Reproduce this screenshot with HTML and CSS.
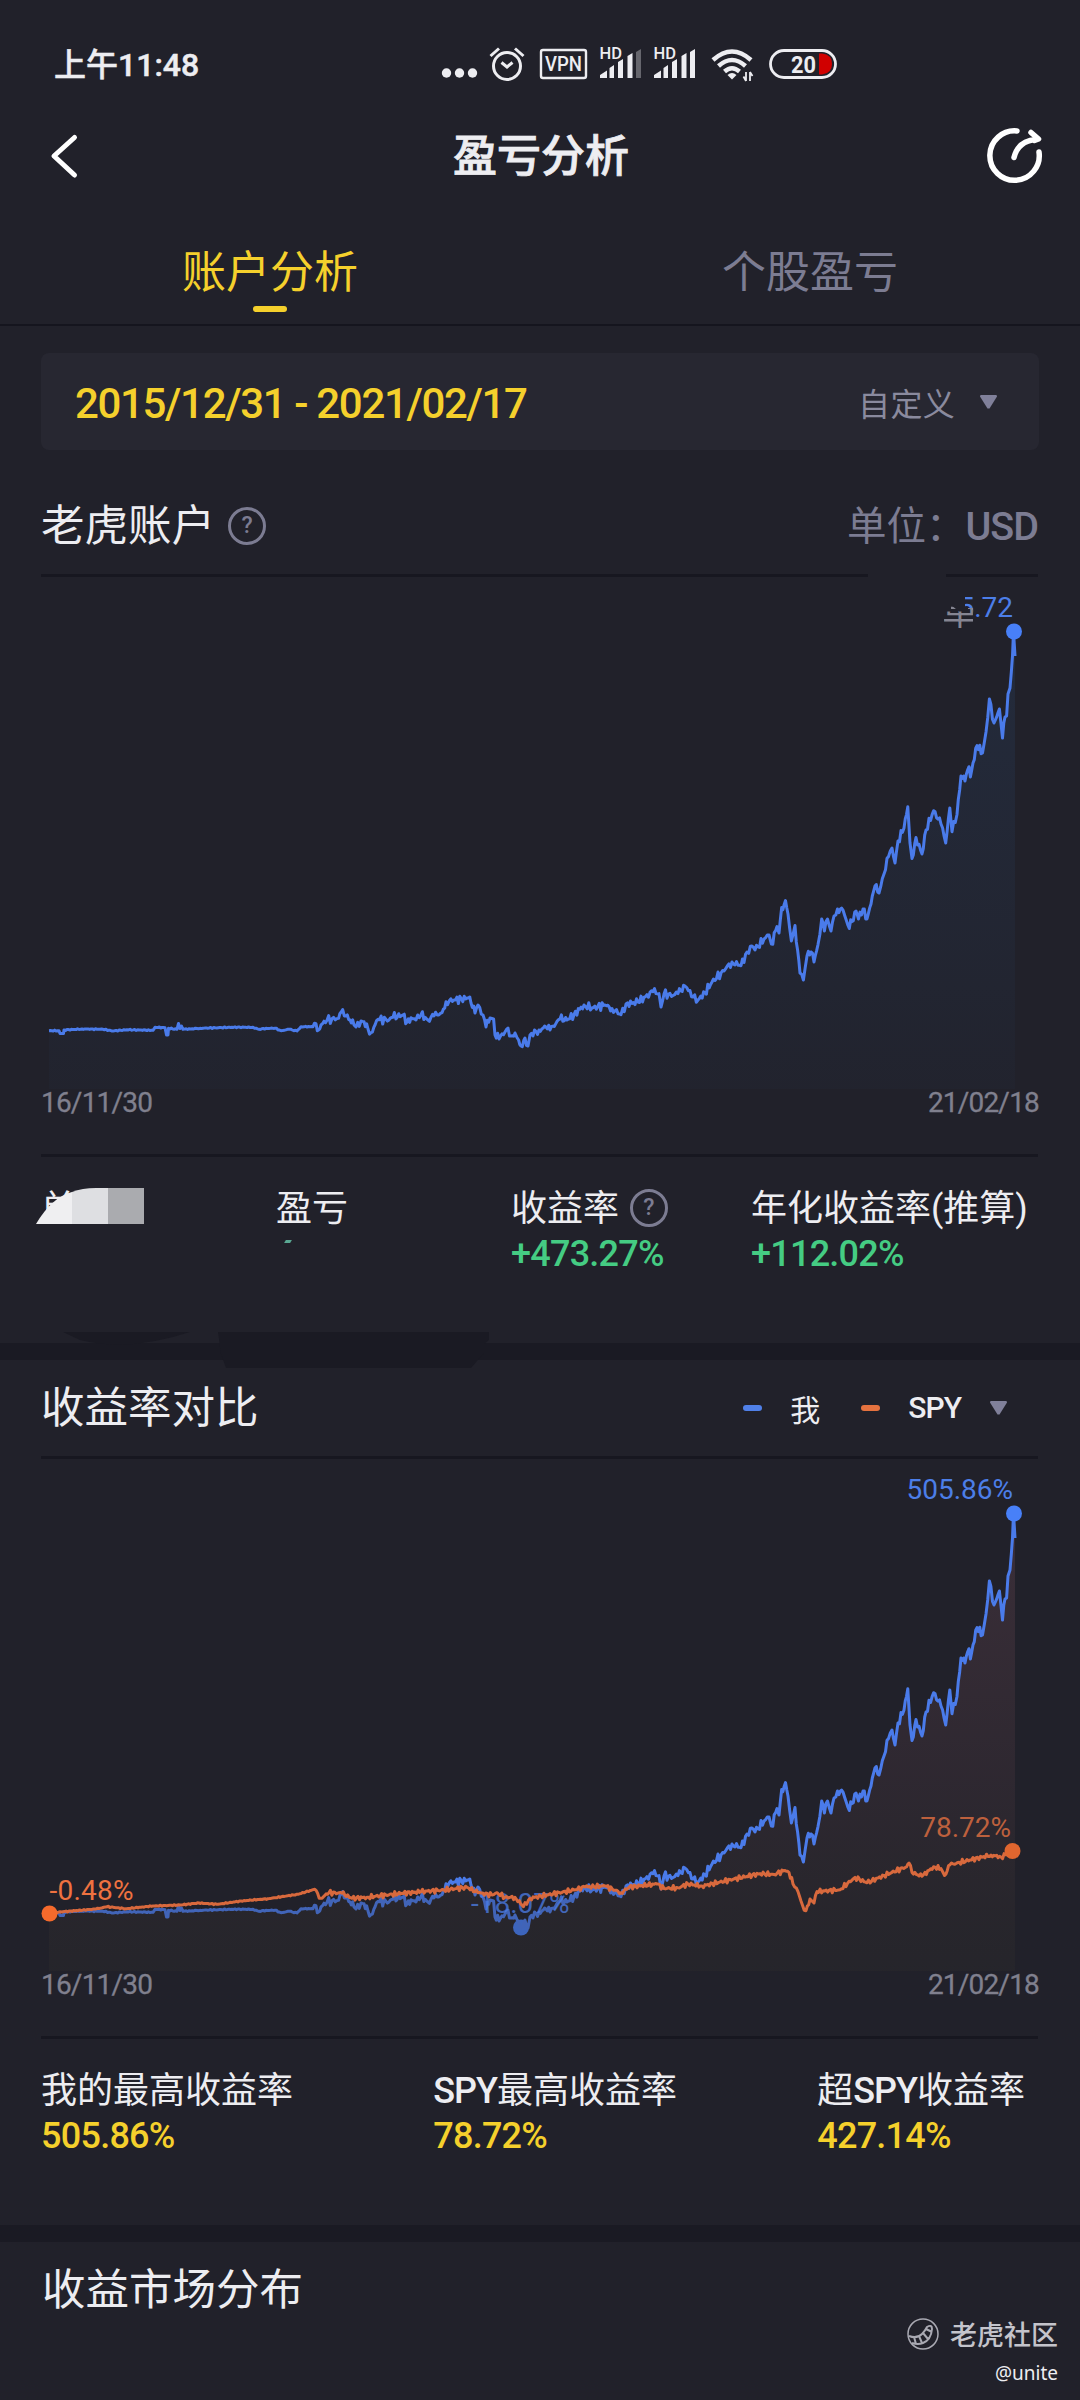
FILE: index.html
```
<!DOCTYPE html>
<html lang="zh-CN">
  <head>
    <meta charset="UTF-8" />
    <meta name="viewport" content="width=device-width, initial-scale=1.0" />
    <title>盈亏分析</title>
    <link rel="stylesheet" href="styles.css">
  </head>
  <body>
    <div class="status">
      <span class="time">上午11:48</span>
      <svg class="status-icons" width="410" height="50" viewBox="440 40 410 50" fill="#ededf1">
        <circle cx="446.5" cy="73" r="4.7" />
        <circle cx="459.5" cy="73" r="4.7" />
        <circle cx="472.5" cy="73" r="4.7" />
        <!-- alarm -->
        <g fill="none" stroke="#ededf1" stroke-width="3">
          <circle cx="507" cy="66" r="13.5" />
          <path d="M501.5 62.5l5.5 4.5 5.5-4.5M490.5 56l8.5-7.5M523.5 56l-8.500-7.500" />
        </g>
        <rect x="541" y="50" width="45" height="28" rx="2" fill="none" stroke="#ededf1" stroke-width="2.4" />
        <text x="563.5" y="71" font-size="20" font-weight="500" text-anchor="middle" textLength="37" lengthAdjust="spacingAndGlyphs">VPN</text>
        <!-- signal -->
        <text x="599.5" y="59" font-size="16.5" font-weight="500" textLength="22.5" lengthAdjust="spacingAndGlyphs">HD</text>
        <path d="M600 78v-3l7-4.500v7.500zM609.500 78v-10l4.500-3v13zM618 78v-16l5-3v19zM627.500 78v-22l5-3v25z" />
        <path d="M636 78v-26l5-3v29z" fill="#66666d" />
        <text x="653.5" y="59" font-size="16.5" font-weight="500" textLength="22.5" lengthAdjust="spacingAndGlyphs">HD</text>
        <path d="M654 78v-3l7-4.500v7.500zM663.500 78v-10l4.500-3v13zM672 78v-16l5-3v19zM681.500 78v-22l5-3v25zM690 78v-26l5-3v29z" />
        <!-- wifi -->
        <g fill="none" stroke="#ededf1" stroke-width="4.5">
          <path d="M713 60q19-17 38 0M718.5 66q13.5-12 27 0M724.5 71.5q7.5-6.5 15 0" />
        </g>
        <path d="M727.5 75q4.5-4 9 0l-4.5 4.5z" />
        <path d="M746 72v9M750 81v-9M743.5 76.5l2.5 4.5M752.5 76l-2.5-4" fill="none" stroke="#ededf1" stroke-width="1.8" />
        <!-- battery -->
        <path d="M819 53.500h3q10 1 10 10.500t-10 10.500h-3z" fill="#d00000" />
        <rect x="770.5" y="50.500" width="65" height="27" rx="13.5" fill="none" stroke="#ededf1" stroke-width="2.8" />
        <text x="791" y="72.500" font-size="24" font-weight="700" textLength="25" lengthAdjust="spacingAndGlyphs">20</text>
      </svg>
    </div>

    <header class="navbar">
      <svg width="60" height="60" viewBox="0 0 60 60" fill="none" stroke="#fff" stroke-width="5" stroke-linecap="round" stroke-linejoin="round">
        <path d="M36.500 12.500L16 31 36.500 50" />
      </svg>
      <h1>盈亏分析</h1>
      <svg width="60" height="60" viewBox="984 125 60 60" fill="none" stroke="#fff" stroke-width="5.5" stroke-linecap="round" stroke-linejoin="round">
        <path d="M1017 131A24.700 24.700 0 1 0 1039 152M1014 157.500Q1018 141 1036 139.500M1031 132.500l7.500 6.500-4 1.500" />
      </svg>
    </header>

    <nav class="tabs">
      <div class="tab active">账户分析</div>
      <div class="tab">个股盈亏</div>
    </nav>

    <div class="range">
      <span class="dates">2015/12/31 - 2021/02/17</span>
      <span class="custom">自定义 <i class="caret"></i></span>
    </div>

    <section class="account">
      <div class="head">
        <h2>老虎账户</h2>
        <span class="help">?</span>
        <span class="unit">单位：<b>USD</b></span>
      </div>
      <div class="line split"><i></i></div>
      <svg class="chart" id="assetChart" width="997" height="512" viewBox="41 577 997 512">
        <defs>
          <linearGradient id="blueFill" x1="0" y1="631" x2="0" y2="1089" gradientUnits="userSpaceOnUse">
            <stop offset="0" stop-color="#3c90f0" stop-opacity=".09" />
            <stop offset="1" stop-color="#3c90f0" stop-opacity=".02" />
          </linearGradient>
          <clipPath id="unitClip"><path d="M944 611.500h29v20h-29zM951 605l8 6.500h-8zM968 608h5v4h-5z" /></clipPath>
          <clipPath id="valueClip"><path d="M965 590h60v32h-52v-12h-8z" /></clipPath>
        </defs>
        <text class="mark blue" x="1013" y="617" text-anchor="end" clip-path="url(#valueClip)">5.72</text>
        <text class="ghost" x="942" y="625" clip-path="url(#unitClip)">单</text>
        <path class="area" fill="url(#blueFill)" />
        <path class="curve blue-line" />
        <circle cx="1014" cy="631.5" r="8" fill="#4880f8" />
      </svg>
      <div class="axis"><span>16/11/30</span><span>21/02/18</span></div>
      <div class="line"></div>
      <div class="stats">
        <div class="stat masked">
          <span class="name">单</span>
          <svg class="mosaic" width="108" height="36" viewBox="0 0 108 36">
            <path d="M0 36Q16 9 36 4v32z" fill="#efeff1" />
            <path d="M36 4Q46 0 60 0h12v36H36z" fill="#dedfe2" />
            <path d="M72 0h36v36H72z" fill="#aaabaf" />
          </svg>
        </div>
        <div class="stat profit">
          <span class="name">盈亏</span>
          <i class="tick"></i>
        </div>
        <div class="stat rate">
          <span class="name">收益率 <span class="help">?</span></span>
          <span class="value green">+473.27%</span>
        </div>
        <div class="stat">
          <span class="name">年化收益率(推算)</span>
          <span class="value green">+112.02%</span>
        </div>
      </div>
    </section>

    <div class="gap">
      <svg class="smudge" width="440" height="38" viewBox="60 1331 440 38" fill="#1a1a23">
        <path d="M63 1332h127q-60 20-110 8zM218 1332h271v8l-5 4v9l-13 15H226l-5-14z" />
      </svg>
    </div>

    <section class="compare">
      <div class="head">
        <h2>收益率对比</h2>
        <div class="legend">
          <i class="dash"></i><span class="me">我</span>
          <i class="dash orange"></i><b>SPY</b>
          <i class="caret"></i>
        </div>
      </div>
      <div class="line"></div>
      <svg class="chart" id="rateChart" width="997" height="512" viewBox="41 1459 997 512">
        <defs>
          <linearGradient id="warmFill" x1="0" y1="1513" x2="0" y2="1971" gradientUnits="userSpaceOnUse">
            <stop offset="0" stop-color="#f490a5" stop-opacity=".12" />
            <stop offset=".6" stop-color="#f49095" stop-opacity=".06" />
            <stop offset="1" stop-color="#a09040" stop-opacity=".035" />
          </linearGradient>
          <linearGradient id="blueStroke" x1="0" y1="1882" x2="0" y2="1900" gradientUnits="userSpaceOnUse">
            <stop offset="0" stop-color="#4a7bea" />
            <stop offset="1" stop-color="#4164b8" />
          </linearGradient>
        </defs>
        <text class="mark blue" x="1013" y="1499" text-anchor="end">505.86%</text>
        <path class="area" fill="url(#warmFill)" />
        <circle cx="521" cy="1927.5" r="8" fill="#3d65bd" />
        <path class="curve blue-line" stroke="url(#blueStroke)" />
        <text class="mark blue dim" x="471" y="1913">-18.07%</text>
        <path class="curve orange-line" />
        <circle cx="1014" cy="1513.5" r="8" fill="#4880f8" />
        <text class="mark orange dark" x="1011" y="1837" text-anchor="end">78.72%</text>
        <circle cx="1012.5" cy="1851" r="8" fill="#e0662f" />
        <text class="mark orange" x="49.5" y="1900" textLength="84">-0.48%</text>
        <circle cx="49.5" cy="1913.5" r="8" fill="#f56a2c" />
      </svg>
      <div class="axis"><span>16/11/30</span><span>21/02/18</span></div>
      <div class="line"></div>
      <div class="stats tops">
        <div class="stat">
          <span class="name">我的最高收益率</span>
          <span class="value yellow">505.86%</span>
        </div>
        <div class="stat">
          <span class="name"><b>SPY</b>最高收益率</span>
          <span class="value yellow">78.72%</span>
        </div>
        <div class="stat">
          <span class="name">超<b>SPY</b>收益率</span>
          <span class="value yellow">427.14%</span>
        </div>
      </div>
    </section>

    <div class="gap"></div>

    <section class="market">
      <h2>收益市场分布</h2>
    </section>

    <footer class="watermark">
      <div class="brand">
        <svg width="32" height="32" viewBox="0 0 32 32" fill="none" stroke="#a9a9b2" stroke-width="1.5">
          <circle cx="16" cy="16" r="15" />
          <path d="M2 18q8 3 13-2 3-3 5-7 5-3 5 2-1 11-9 14-5 2-11 0M7 19l2 7M12 18l3 7M16 15l5 6M19 11l6 3" stroke-width="2" />
        </svg>
        <span>老虎社区</span>
      </div>
      <div class="user">@unite</div>
    </footer>

    <script src="script.js"></script>
  </body>
</html>
```
FILE: styles.css
```
body {
  margin: 0;
  width: 1080px;
  height: 2400px;
  overflow: hidden;
  display: flex;
  flex-direction: column;
  background-color: #21212a;
  color: #ededf1;
  font-family: Roboto, "Noto Sans CJK SC", sans-serif;
}

body > * {
  flex-shrink: 0;
  box-sizing: border-box;
}

svg {
  display: block;
}

i {
  font-style: normal;
}

h1,
h2 {
  margin: 0;
  font-size: 44px;
  line-height: 60px;
  font-weight: 400;
}

h2 {
  font-size: 43.5px;
}

b {
  font-weight: 500;
  letter-spacing: -1px;
}

.status {
  display: flex;
  height: 110px;
  padding: 40px 0 0 54px;
}

.time {
  width: 386px;
  font-size: 32px;
  font-weight: 500;
  line-height: 51px;
  -webkit-text-stroke: 0.5px #ededf1;
}

.navbar {
  display: flex;
  justify-content: space-between;
  align-items: center;
  height: 90px;
  padding: 0 36px 0 38px;
}

.navbar h1 {
  padding-top: 3px;
  font-weight: 500;
  -webkit-text-stroke: 0.8px #ededf1;
}

.tabs {
  display: flex;
  height: 126px;
  border-bottom: 2px solid #15151e;
}

.tab {
  flex: 1;
  display: flex;
  flex-direction: column;
  align-items: center;
  padding-top: 43px;
  font-size: 44px;
  line-height: 60px;
  color: #7c7c92;
}

.active {
  color: #f5d02c;
}

.active::after {
  content: "";
  width: 34px;
  height: 6px;
  margin-top: 3px;
  border-radius: 3px;
  background-color: #f5d02c;
}

.range {
  display: flex;
  justify-content: space-between;
  align-items: center;
  height: 97px;
  margin: 27px 41px 0;
  padding: 0 42px 0 34px;
  border-radius: 8px;
  background-color: #272731;
}

.dates {
  padding-top: 3px;
  font-size: 42px;
  font-weight: 500;
  letter-spacing: -1.35px;
  color: #f5d02c;
}

.custom {
  display: flex;
  align-items: center;
  gap: 25px;
  font-size: 32px;
  letter-spacing: 0.3px;
  color: #8a8a9e;
}

.caret {
  width: 17px;
  height: 14px;
  background-color: #80809a;
  clip-path: polygon(4% 0, 96% 0, 100% 14%, 56% 100%, 44% 100%, 0 14%);
}

.account,
.compare {
  padding: 0 42px 0 41px;
}

.head {
  display: flex;
  align-items: center;
}

.account .head {
  height: 124px;
  padding-top: 29px;
  box-sizing: border-box;
}

.help {
  display: inline-flex;
  justify-content: center;
  align-items: center;
  box-sizing: border-box;
  width: 38px;
  height: 38px;
  margin-left: 13px;
  border: 3px solid #7c7c92;
  border-radius: 50%;
  font-size: 23px;
  font-weight: 500;
  line-height: 1;
  color: #7c7c92;
}

.account .head .help {
  margin-bottom: 2px;
}

.unit {
  margin-left: auto;
  font-size: 39.5px;
  line-height: 60px;
  color: #7c7c92;
}

.line {
  width: 997px;
  height: 3px;
  background-color: #171720;
}

/* part of the rule is hidden behind the mask */
.split i {
  display: block;
  width: 78px;
  height: 3px;
  margin-left: 827px;
  background-color: #21212a;
}

.mark {
  font-size: 28px;
}

.blue {
  fill: #4c7ee8;
}

.orange {
  fill: #ef7240;
}

.dark {
  fill: #bd603d;
}

.dim {
  opacity: 0.75;
}

.ghost {
  font-size: 36px;
  fill: #858592;
}

.curve {
  fill: none;
  stroke-width: 3;
  stroke-linejoin: round;
}

#assetChart .blue-line {
  stroke: #4a7bea;
}

.orange-line {
  stroke: #d8693d;
}

.axis {
  display: flex;
  justify-content: space-between;
  width: 998px;
  height: 65px;
  font-size: 28px;
  line-height: 27px;
  letter-spacing: -0.8px;
  color: #80808e;
}

.axis span {
  height: 27px;
  -webkit-text-stroke: 0.3px #80808e;
}

.stats {
  display: flex;
  height: 186px;
  padding-top: 25px;
  box-sizing: border-box;
}

.stat {
  display: flex;
  flex-direction: column;
}

.name {
  height: 51px;
  font-size: 36px;
  line-height: 54px;
  white-space: nowrap;
}

.name .help {
  vertical-align: 6px;
  margin-left: 2px;
}

.value {
  font-size: 36px;
  font-weight: 500;
  line-height: 42px;
  letter-spacing: -0.75px;
}

.green {
  color: #45cc83;
}

.yellow {
  color: #f5d02c;
}

.masked {
  position: relative;
  width: 235px;
}

.mosaic {
  position: absolute;
  left: -5px;
  top: 6px;
}

.profit {
  width: 235px;
}

.rate {
  width: 240px;
}

.tick {
  width: 6px;
  height: 3px;
  margin: 7px 0 0 9px;
  background-color: #5aa893;
  transform: skewX(-30deg);
}

.gap {
  position: relative;
  height: 17px;
  background-color: #1a1a23;
}

.smudge {
  position: absolute;
  left: 60px;
  top: -12px;
}

.compare .head {
  height: 96px;
  padding-top: 2px;
  box-sizing: border-box;
}

.legend {
  display: flex;
  align-items: center;
  margin-left: auto;
  margin-right: 31px;
  margin-bottom: 3px;
  font-size: 30px;
}

.dash {
  width: 19px;
  height: 6px;
  border-radius: 3px;
  background-color: #5080e8;
}

.dash.orange {
  margin-left: 41px;
  background-color: #e5723f;
}

.me {
  margin-left: 28px;
}

.legend b {
  margin-left: 28px;
  margin-right: 29px;
}

.tops {
  justify-content: space-between;
  padding-right: 13px;
}

.market {
  height: 75px;
  padding: 19px 42px 0;
}

.watermark {
  display: flex;
  flex-direction: column;
  align-items: flex-end;
  padding-right: 22px;
}

.brand {
  display: flex;
  align-items: center;
  gap: 11px;
  height: 34px;
  font-size: 27px;
  font-weight: 500;
  color: #c4c4cb;
}

.brand span {
  margin-top: -2px;
}

.user {
  margin-top: 8px;
  font-family: "Noto Sans", sans-serif;
  font-size: 19px;
  line-height: 28px;
}
```
FILE: script.js
```
const me = [
  [49, 1030.7], [59, 1030.7], [60, 1033.5], [63.5, 1033.5], [64, 1030], [82, 1029], [103, 1029.3], [113, 1031],
  [127, 1029.7], [153, 1030.3], [155, 1027.3], [165, 1027.7], [166.5, 1035], [168, 1035], [168.5, 1028.3],
  [177, 1029.3], [178.5, 1023.5], [180, 1028.5], [181.5, 1026], [183, 1029.3], [200, 1028.3], [232, 1027.3],
  [253, 1027.3], [259, 1029.3], [266, 1028.3], [275, 1028.3], [281, 1030.7], [289, 1029.3], [297, 1031],
  [301, 1026.7], [313, 1026.7], [316, 1023.7], [318.6, 1030], [321, 1025], [327, 1020.3], [332, 1018.7],
  [338.6, 1018.3], [341, 1012.3], [346, 1016], [350, 1020], [354, 1025], [356, 1027], [361, 1021], [364, 1021.7],
  [368, 1029], [371, 1032.7], [378, 1019.3], [389, 1020], [393, 1017.3], [403, 1015], [407, 1022], [411, 1017.7],
  [416, 1020], [421, 1014.7], [428, 1020], [434, 1016], [442, 1012.7], [446, 1001.7], [454, 1000], [468.6, 998],
  [471, 1003], [475, 1013], [478, 1005], [483, 1015], [486, 1027], [490, 1018], [493.6, 1019], [495, 1035],
  [499, 1039], [508, 1028], [511, 1036], [515, 1033], [518.6, 1040], [521, 1046], [525, 1038], [528, 1046],
  [530, 1035], [539, 1030], [546, 1027], [550, 1030], [560, 1019], [567, 1020], [574, 1014.6], [584, 1005],
  [592, 1008], [605, 1005], [612, 1008.5], [621, 1014.6], [626, 1004], [638, 1002], [653, 991.7], [659, 993.6],
  [661, 1007], [664, 994], [673, 995.5], [678, 993.6], [685, 986], [690, 990.5], [693, 997], [698, 1000],
  [705, 992.5], [712, 982], [721, 973], [732, 962], [741, 965.7], [747, 952], [752, 946], [755, 950], [764, 939],
  [769, 935], [771.4, 944], [777, 926.6], [779, 933], [781.7, 907.5], [784, 905], [785.5, 900.6], [788, 914],
  [791.4, 941], [795, 925.5], [797.6, 950], [800, 973], [803.4, 980], [807, 956], [811, 952], [814, 962],
  [818, 944.6], [821.7, 919], [824.4, 931], [827.5, 919], [831, 931], [834, 916], [837.5, 909], [843, 910],
  [848, 925.5], [852, 921.6], [856, 911], [858.5, 919], [863, 909], [867, 919], [871, 904], [875, 886], [879, 893],
  [884, 874], [888.5, 856.6], [892, 848], [895, 863], [898, 841], [904, 828], [907.8, 806.8], [910, 843],
  [912, 858.5], [916, 837.5], [922, 854], [926, 830], [933.6, 810.7], [941, 824], [945.7, 843], [949.8, 808],
  [952, 831.7], [957, 814.5], [961, 776], [965, 781], [969, 766.7], [970.4, 777], [973, 763], [977, 745.6],
  [982.5, 753], [986, 732], [989.4, 699], [994, 723], [999.4, 709], [1002.5, 738], [1005, 717], [1006.6, 716],
  [1008, 694], [1010, 688], [1012.5, 656], [1013.5, 631], [1015, 656]
];

const spy = [
  [49.7, 1913], [63, 1911.7], [96, 1909], [107, 1906.7], [126, 1908.7], [153, 1906], [180, 1905], [199, 1903],
  [218, 1904.3], [241, 1901], [268, 1898.7], [298, 1894.3], [314.6, 1889.3], [320.7, 1898.3], [329, 1892.7],
  [342, 1893.3], [352, 1898.3], [367, 1897.3], [386, 1895], [402, 1893.3], [421, 1891.7], [444, 1890],
  [467, 1887.3], [478, 1892.7], [492, 1895], [497, 1892.7], [505, 1897.3], [515, 1897.3], [523.5, 1906.7],
  [530, 1898.3], [547, 1895], [574, 1890], [585, 1887], [605, 1886], [621, 1892.7], [629.5, 1887], [657, 1884],
  [664, 1888.5], [678, 1887.8], [688, 1884], [702, 1886], [733, 1879.3], [760, 1873.6], [774, 1874.4],
  [785, 1870.5], [789, 1872.5], [793, 1884], [798, 1891.6], [802.4, 1905], [806, 1910.7], [810, 1899],
  [814, 1903], [817, 1891.6], [840, 1889.7], [855, 1877.4], [867, 1882.8], [884, 1875.5], [906.7, 1866.7],
  [909, 1863], [912, 1872.5], [922, 1876.3], [933.6, 1866.7], [941, 1868.6], [944.6, 1875.5], [950, 1864.8],
  [970, 1860], [991, 1855], [1001, 1857], [1012, 1851.4]
];

// adds small daily swings between the main points
function daily(points, size) {
  const out = [];
  let n = 0;
  for (let i = 0; i < points.length - 1; i++) {
    const [x1, y1] = points[i];
    const [x2, y2] = points[i + 1];
    const steps = Math.max(1, Math.round((x2 - x1) / 1.5));
    const swing = x1 < 312 ? 0.3 : size;
    for (let s = 0; s < steps; s++) {
      const t = s / steps;
      const noise = s === 0 ? 0 : (Math.sin(n * 2.7) + Math.sin(n * 4.3)) * swing;
      out.push([x1 + (x2 - x1) * t, y1 + (y2 - y1) * t + noise]);
      n++;
    }
  }
  out.push(points[points.length - 1]);
  return out;
}

function toPath(points, dy) {
  return "M" + points.map((p) => p[0].toFixed(1) + " " + (p[1] + dy).toFixed(1)).join("L");
}

function drawChart(id, dy) {
  const chart = document.getElementById(id);
  const line = toPath(daily(me, 2.3), dy);
  chart.querySelector(".blue-line").setAttribute("d", line);
  chart.querySelector(".area").setAttribute("d", line + "V" + (1089 + dy) + "H49Z");
}

drawChart("assetChart", 0);
drawChart("rateChart", 882);
document.querySelector(".orange-line").setAttribute("d", toPath(daily(spy, 1.3), 0));
```
